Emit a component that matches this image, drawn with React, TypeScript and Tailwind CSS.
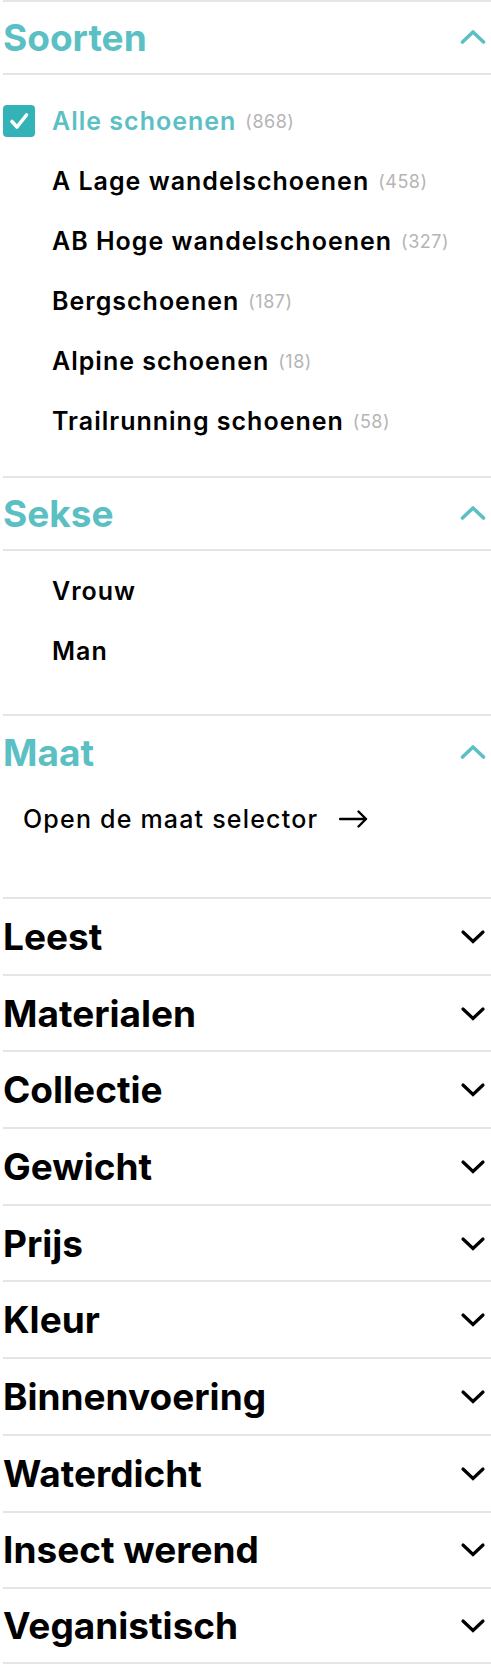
const soorten = [
    { label: "Alle schoenen", count: 868, checked: true },
    { label: "A Lage wandelschoenen", count: 458 },
    { label: "AB Hoge wandelschoenen", count: 327 },
    { label: "Bergschoenen", count: 187 },
    { label: "Alpine schoenen", count: 18 },
    { label: "Trailrunning schoenen", count: 58 },
];

const closedFilters = [
    "Leest",
    "Materialen",
    "Collectie",
    "Gewicht",
    "Prijs",
    "Kleur",
    "Binnenvoering",
    "Waterdicht",
    "Insect werend",
    "Veganistisch",
];

function ChevronUp() {
    return (
        <svg width="26" height="16" viewBox="0 0 26 16" fill="none" className="text-[#5bc0c4]">
            <path d="M2.5 13L13 3L23.5 13" stroke="currentColor" strokeWidth="3.6" strokeLinecap="round" strokeLinejoin="round" />
        </svg>
    );
}

function ChevronDown() {
    return (
        <svg width="26" height="16" viewBox="0 0 26 16" fill="none" className="text-black">
            <path d="M3 3L13 12.5L23 3" stroke="currentColor" strokeWidth="3.2" strokeLinecap="round" strokeLinejoin="miter" />
        </svg>
    );
}

function Checkbox() {
    return (
        <div className="w-8 h-8 rounded-[4px] bg-[#33b3b8] flex items-center justify-center shrink-0">
            <svg width="22" height="22" viewBox="0 0 22 22" fill="none">
                <path d="M4 11.5L9 17L18.5 5" stroke="white" strokeWidth="3.6" strokeLinecap="round" strokeLinejoin="round" />
            </svg>
        </div>
    );
}

function OpenHeader({ title, border }: { title: string; border: boolean }) {
    return (
        <div className={`h-[75px] flex items-center justify-between border-t-2 border-[#e5e5e5] ${border ? "border-b-2" : ""}`}>
            <h2 className="text-[37px] font-bold text-[#5bc0c4]">{title}</h2>
            <div className="pr-[5px] pb-[1px]">
                <ChevronUp />
            </div>
        </div>
    );
}

function Item({ label, count, checked }: { label: string; count?: number; checked?: boolean }) {
    return (
        <div className="h-[60px] flex items-center">
            <div className="w-8 shrink-0">{checked && <Checkbox />}</div>
            <span className={`ml-[17px] text-[25px] font-semibold tracking-[1px] ${checked ? "text-[#5bc0c4]" : "text-black"}`}>
                {label}
            </span>
            {count !== undefined && (
                <span className="ml-[9px] mt-[2px] text-[18px] text-[#b5b5b5] tracking-[0.5px]">({count})</span>
            )}
        </div>
    );
}

export default function App() {
    return (
        <div className="w-[491px] bg-white pl-[3px] font-['Inter',sans-serif] leading-none">
            {/* Soorten */}
            <OpenHeader title="Soorten" border />
            <div className="pt-[16px] pb-[25px]">
                {soorten.map((s) => (
                    <Item key={s.label} label={s.label} count={s.count} checked={s.checked} />
                ))}
            </div>

            {/* Sekse */}
            <OpenHeader title="Sekse" border />
            <div className="pt-[10px] pb-[33px]">
                <Item label="Vrouw" />
                <Item label="Man" />
            </div>

            {/* Maat */}
            <OpenHeader title="Maat" border={false} />
            <div className="pt-[10px] pb-[58px]">
                <button className="h-[40px] pl-[20px] flex items-center gap-[21px] text-[25px] font-medium tracking-[1.2px] text-black">
                    Open de maat selector
                    <svg width="29" height="18" viewBox="0 0 29 18" fill="none">
                        <path d="M1 9H27M19.5 1.5L27 9L19.5 16.5" stroke="black" strokeWidth="2.4" strokeLinecap="round" strokeLinejoin="round" />
                    </svg>
                </button>
            </div>

            {/* Dichte filters */}
            {closedFilters.map((f, i) => (
                <div
                    key={f}
                    className={`h-[76.7px] flex items-center justify-between border-t-2 border-[#e5e5e5] ${i === closedFilters.length - 1 ? "border-b-2" : ""}`}
                >
                    <h2 className="text-[37px] font-bold text-black">{f}</h2>
                    <div className="pr-[5px] pt-[1px]">
                        <ChevronDown />
                    </div>
                </div>
            ))}
        </div>
    );
}
